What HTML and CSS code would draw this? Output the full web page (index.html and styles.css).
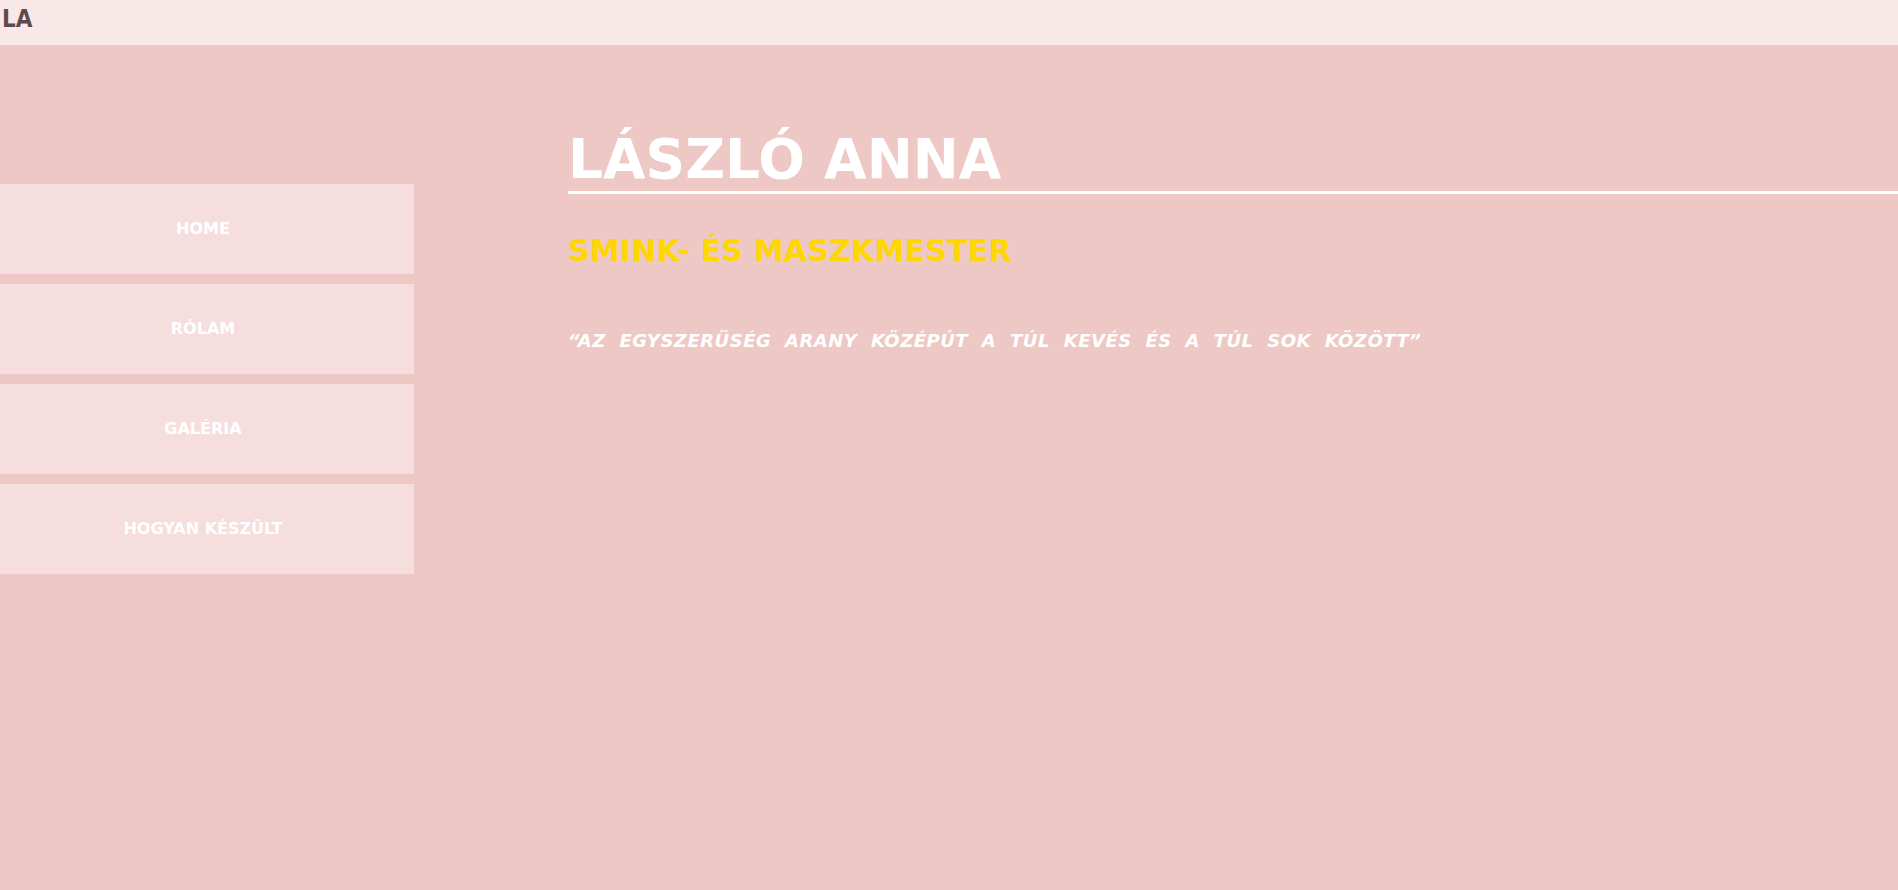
FILE: index.html
```html
<!DOCTYPE html>
<html lang="hu">
<head>
<meta charset="utf-8">
<title>László Anna</title>
<link rel="stylesheet" href="styles.css">
</head>
<body>
<header class="topbar">
  <span class="logo">LA</span>
</header>
<div class="page">
  <nav class="sidebar">
    <a class="nav-item" href="#">HOME</a>
    <a class="nav-item" href="#">RÓLAM</a>
    <a class="nav-item" href="#">GALÉRIA</a>
    <a class="nav-item" href="#">HOGYAN KÉSZÜLT</a>
  </nav>
  <main class="content">
    <h1 class="title">LÁSZLÓ ANNA</h1>
    <h2 class="subtitle">SMINK- ÉS MASZKMESTER</h2>
    <p class="quote">“AZ EGYSZERŰSÉG ARANY KÖZÉPÚT A TÚL KEVÉS ÉS A TÚL SOK KÖZÖTT”</p>
  </main>
</div>
</body>
</html>
```
FILE: styles.css
```css
html, body {
  margin: 0;
  padding: 0;
}
body {
  background: #eec8c5;
  font-family: "DejaVu Sans", Verdana, sans-serif;
  min-height: 890px;
}
.topbar {
  background: #f8e8e8;
  height: 45px;
  padding-left: 2px;
}
.logo {
  display: block;
  font-family: "DejaVu Sans Condensed", "DejaVu Sans", sans-serif;
  font-weight: bold;
  font-stretch: condensed;
  font-size: 24px;
  line-height: 39px;
  color: #5e4a4b;
}
.page {
  display: flex;
  align-items: flex-start;
}
.sidebar {
  width: 414px;
  flex: none;
  padding-top: 139px;
  display: flex;
  flex-direction: column;
  gap: 10px;
}
.nav-item {
  display: block;
  height: 90px;
  line-height: 90px;
  padding-right: 8px;
  background: #f5dedd;
  color: #ffffff;
  text-align: center;
  text-decoration: none;
  font-weight: bold;
  font-size: 16px;
}
.content {
  flex: 1;
  margin-left: 154px;
  padding-top: 82px;
}
.title {
  margin: 0;
  font-size: 55px;
  font-weight: bold;
  line-height: normal;
  color: #ffffff;
  border-bottom: 3px solid #ffffff;
}
.subtitle {
  margin: 39px 0 0;
  font-size: 30px;
  font-weight: bold;
  line-height: normal;
  letter-spacing: 0.2px;
  color: #ffd700;
}
.quote {
  margin: 62px 0 0;
  font-size: 18px;
  font-weight: bold;
  font-style: italic;
  line-height: normal;
  letter-spacing: 0.5px;
  word-spacing: 7px;
  color: #ffffff;
}
```
